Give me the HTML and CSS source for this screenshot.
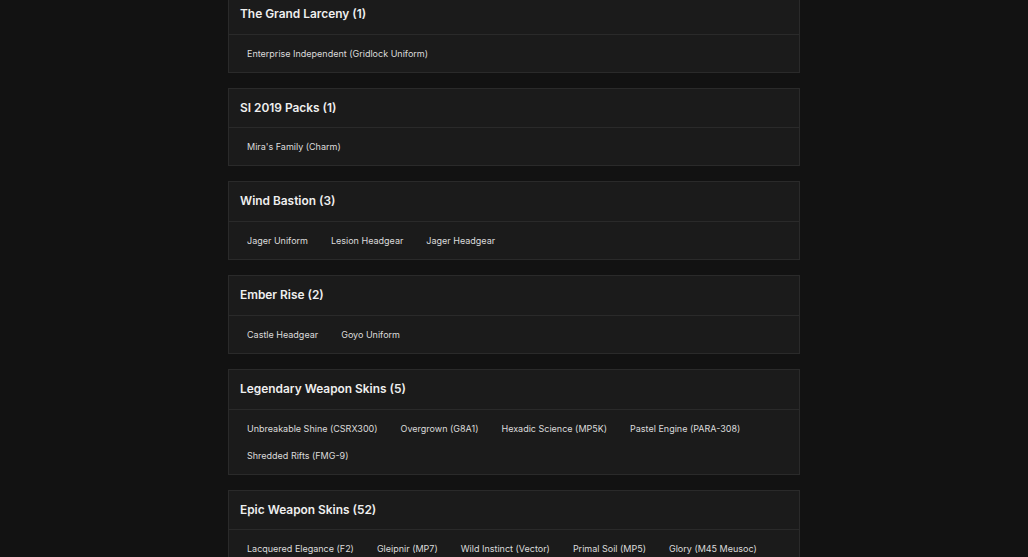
FILE: index.html
```html
<!DOCTYPE html>
<html lang="en">
<head>
    <meta charset="UTF-8">
    <meta name="viewport" content="width=device-width, initial-scale=1.0">
    <title>Collection</title>
    <link rel="stylesheet" href="styles.css">
</head>
<body>
    <div class="container">
        <div class="card">
            <div class="card-head">The Grand Larceny (1)</div>
            <div class="card-body">
                <span class="item">Enterprise Independent (Gridlock Uniform)</span>
            </div>
        </div>

        <div class="card">
            <div class="card-head">SI 2019 Packs (1)</div>
            <div class="card-body">
                <span class="item">Mira's Family (Charm)</span>
            </div>
        </div>

        <div class="card">
            <div class="card-head">Wind Bastion (3)</div>
            <div class="card-body">
                <span class="item">Jager Uniform</span>
                <span class="item">Lesion Headgear</span>
                <span class="item">Jager Headgear</span>
            </div>
        </div>

        <div class="card">
            <div class="card-head">Ember Rise (2)</div>
            <div class="card-body">
                <span class="item">Castle Headgear</span>
                <span class="item">Goyo Uniform</span>
            </div>
        </div>

        <div class="card">
            <div class="card-head">Legendary Weapon Skins (5)</div>
            <div class="card-body">
                <span class="item">Unbreakable Shine (CSRX300)</span>
                <span class="item">Overgrown (G8A1)</span>
                <span class="item">Hexadic Science (MP5K)</span>
                <span class="item">Pastel Engine (PARA-308)</span>
                <span class="item">Shredded Rifts (FMG-9)</span>
            </div>
        </div>

        <div class="card">
            <div class="card-head">Epic Weapon Skins (52)</div>
            <div class="card-body">
                <span class="item">Lacquered Elegance (F2)</span>
                <span class="item">Gleipnir (MP7)</span>
                <span class="item">Wild Instinct (Vector)</span>
                <span class="item">Primal Soil (MP5)</span>
                <span class="item">Glory (M45 Meusoc)</span>
            </div>
        </div>
    </div>
</body>
</html>
```
FILE: styles.css
```css
html, body { height: 100%; overflow: hidden; }
body { font-family: Inter, "Open Sans", sans-serif; margin: 0; background: #121212; color: #efefef; }
.container { width: 572px; margin: -6px auto 0; }
.card { background: #1b1b1b; border: 1px solid #2a2a2a; margin-bottom: 15px; }
.card-head { padding: 12px 11px; font-size: 11.9px; line-height: 14.7px; font-weight: 600; border-bottom: 1px solid #2a2a2a; }
.card-body { display: flex; flex-wrap: wrap; padding: 5px 7px; }
.item { padding: 6px 11px; margin-right: 1px; font-size: 9px; line-height: 15px; color: #dcdcdc; }
```
